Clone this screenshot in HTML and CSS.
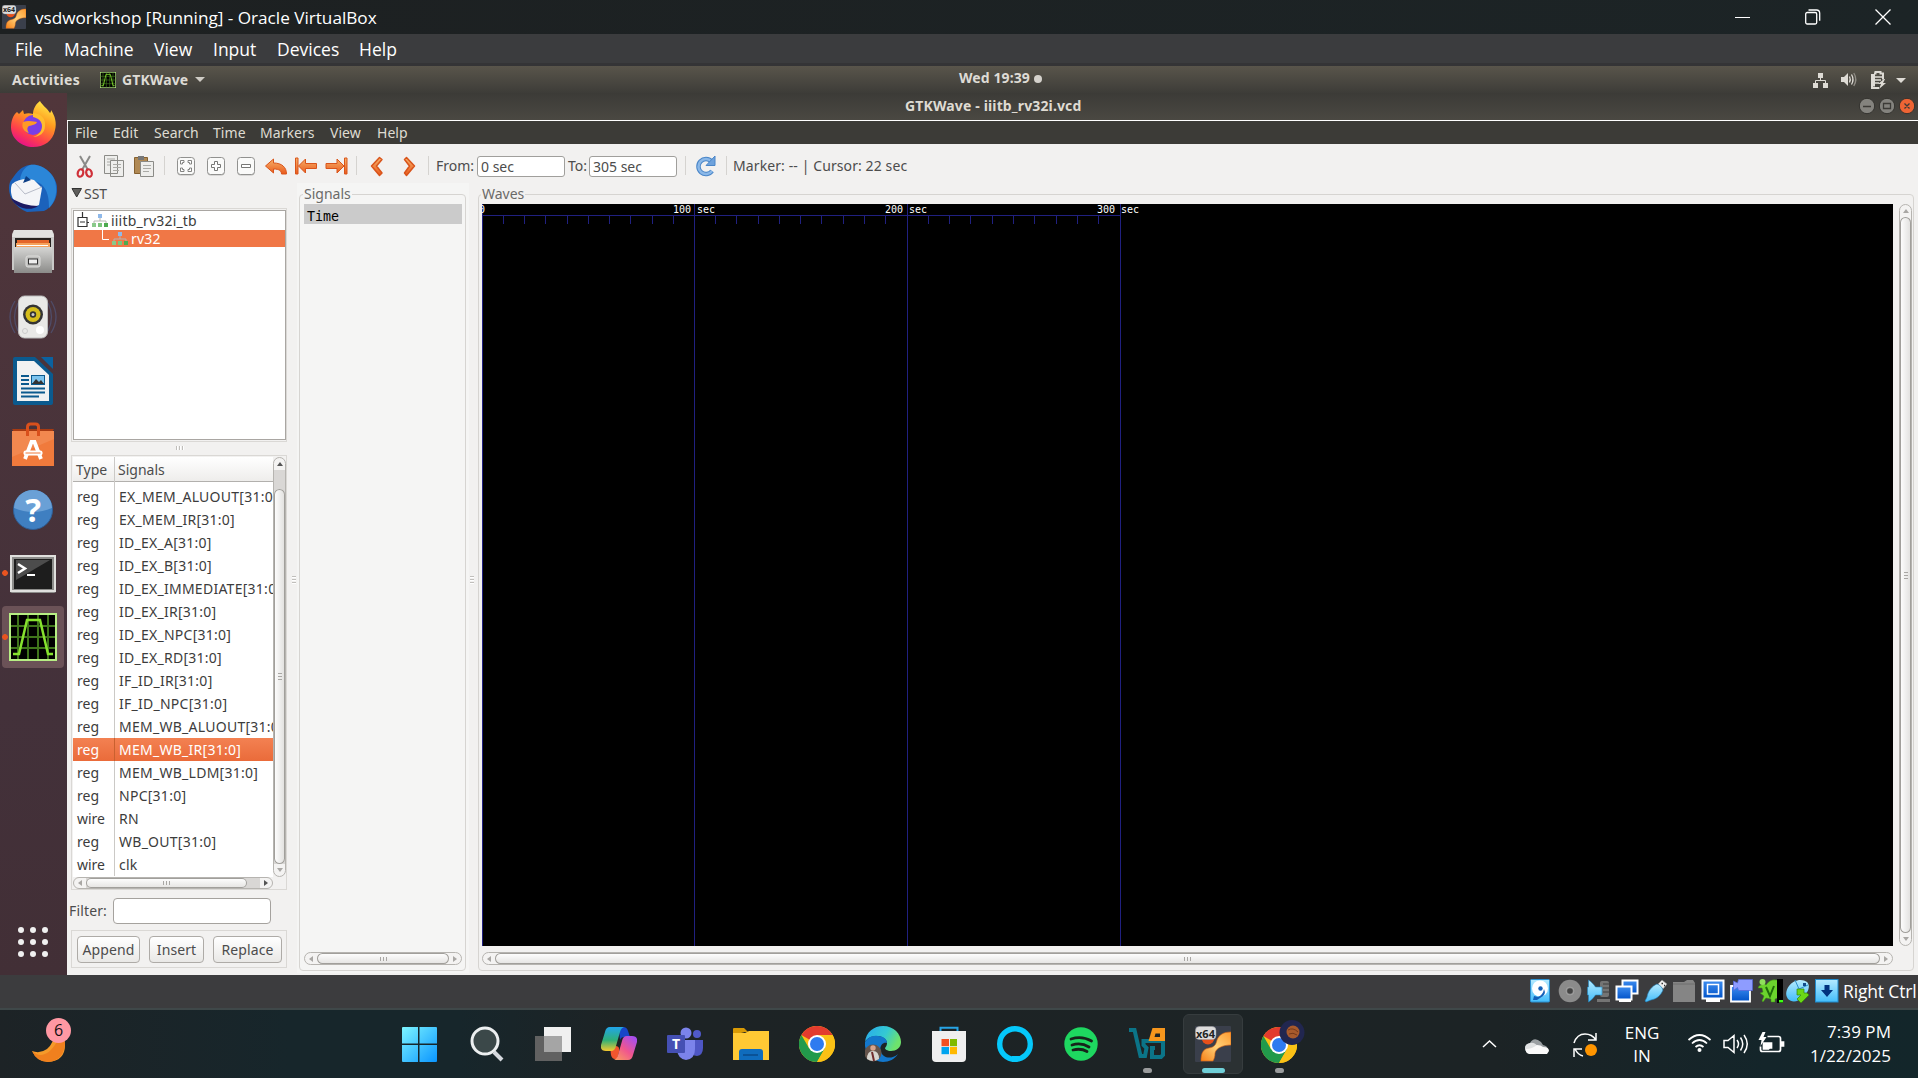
FILE: index.html
```html
<!DOCTYPE html>
<html lang="en">
<head>
<meta charset="utf-8">
<title>vsdworkshop [Running] - Oracle VirtualBox</title>
<link rel="stylesheet" href="styles.css">
</head>
<body>
<svg width="0" height="0" class="defs">
  <defs>
    <linearGradient id="orange" x1="0" y1="0" x2="0" y2="1"><stop offset="0" stop-color="#f6b26b"/><stop offset="1" stop-color="#ea5a1c"/></linearGradient>
    <linearGradient id="grey" x1="0" y1="0" x2="0" y2="1"><stop offset="0" stop-color="#d6d6d4"/><stop offset="1" stop-color="#8b8b89"/></linearGradient>
    <linearGradient id="cyan" x1="0" y1="0" x2="0" y2="1"><stop offset="0" stop-color="#b5eaff"/><stop offset="1" stop-color="#43bdfa"/></linearGradient>
    <linearGradient id="win" x1="0" y1="0" x2="1" y2="1"><stop offset="0" stop-color="#7df5ff"/><stop offset="1" stop-color="#0a95ff"/></linearGradient>
    <linearGradient id="vbx" x1="1" y1="0" x2="0" y2="1"><stop offset="0" stop-color="#ff9a2e"/><stop offset=".5" stop-color="#ffd27a"/><stop offset="1" stop-color="#f77f16"/></linearGradient>
    <linearGradient id="blu" x1="0" y1="0" x2="0" y2="1"><stop offset="0" stop-color="#3d8df0"/><stop offset="1" stop-color="#0052c8"/></linearGradient>
    <symbol id="i-vbox" viewBox="0 0 36 36">
      <rect width="36" height="36" rx="1" fill="#3a3f4b"/>
      <circle cx="13" cy="12" r="6.500" fill="#e8501a"/>
      <path d="M36 6v13c-8 0-15 3-16 8 0 4-1 6-2 8H6c0-8 2-12 8-13 6-1 7-4 8-8 2-5 6-8 14-8Z" fill="url(#vbx)" stroke="#d9600e" stroke-width=".6"/>
      <rect x="0.500" y="0.500" width="20.500" height="13" rx="4" fill="#dcdcdc" stroke="#9a9a9a" stroke-width=".5"/>
    </symbol>
    <symbol id="i-gtkwave" viewBox="0 0 48 48">
      <rect width="48" height="48" fill="#b7ee84"/><rect x="2" y="2" width="44" height="44" fill="#000"/>
      <path d="M9 2v44M19 2v44M29 2v44M39 2v44M2 13h44M2 24h44M2 35h44" stroke="#3f741b" stroke-width="2"/>
      <path d="M4 41h6L18 7h13l8 34h5" fill="none" stroke="#86e22e" stroke-width="2.500"/>
    </symbol>
    <symbol id="i-chrome" viewBox="0 0 36 36">
      <circle cx="18" cy="18" r="18" fill="#fbc116"/>
      <path d="M18 18 2.400 9A18 18 0 0 1 33.600 9H18Z" fill="#e33b2e"/>
      <path d="M2.400 9A18 18 0 0 0 18 36L25.800 22.500 18 18 10.200 22.500Z" fill="#229a4b"/>
      <path d="M33.600 9A18 18 0 0 1 18 36L25.800 22.500 18 9Z" fill="#fbc116"/>
      <circle cx="18" cy="18" r="9" fill="#fff"/><circle cx="18" cy="18" r="7" fill="#2f7bf0"/>
    </symbol>
    <symbol id="i-hier" viewBox="0 0 16 14">
      <path d="M8 4v3M2 9V7h12v2" fill="none" stroke="#b4b4b0"/>
      <rect x="6" y="0" width="4" height="4" fill="#8fb9ea"/><rect x="0" y="9" width="4" height="4" fill="#8ac98a"/><rect x="6" y="9" width="4" height="4" fill="#7cc47c"/><rect x="12" y="9" width="4" height="4" fill="#4daa4f"/>
    </symbol>
    <symbol id="i-btn" viewBox="0 0 18 19">
      <rect x=".5" y="1" width="17" height="17.500" rx="3" fill="#bdbdbb"/>
      <rect x=".5" y=".5" width="17" height="17" rx="3" fill="#fafaf9" stroke="#91918f"/>
    </symbol>
  </defs>
</svg>

<header class="titlebar">
  <div class="vbox-mark"><svg width="24" height="24"><use href="#i-vbox"/></svg><b>x64</b></div>
  <span class="titlebar-text">vsdworkshop [Running] - Oracle VirtualBox</span>
  <div class="win-controls">
    <svg width="16" height="16"><path d="M0 8.500h15" stroke="#fff"/></svg>
    <svg width="16" height="16" fill="none" stroke="#fff"><rect x=".7" y="3.500" width="11" height="11.500" rx="1.500" stroke-width="1.300"/><path d="M3.500 1h8a3.200 3.200 0 0 1 3.200 3.200v7.500" stroke-width="1.300"/></svg>
    <svg width="16" height="16"><path d="m.5.5 15 15m0-15-15 15" stroke="#fff" stroke-width="1.300"/></svg>
  </div>
</header>
<nav class="vb-menu"><span>File</span><span>Machine</span><span>View</span><span>Input</span><span>Devices</span><span>Help</span></nav>

<section class="guest">
  <div class="top-panel">
    <span class="activities">Activities</span>
    <svg width="16" height="16" class="app-ico"><use href="#i-gtkwave"/></svg>
    <span class="app-name">GTKWave</span><i class="caret"></i>
    <span class="clock">Wed 19:39</span><i class="dot"></i>
    <svg class="ind" width="94" height="18" fill="#dedbd5">
      <path d="M6 2h5v5H6zM1 12h5v5H1zM11 12h5v5h-5z"/><path d="M8.500 7v3M3.500 12v-2.500h10V12" fill="none" stroke="#dedbd5"/>
      <path d="M29 6h3l4-4v13l-4-4h-3z"/><path d="M37.500 5.500q1.500 3 0 6M39.500 3.500q3 5 0 10" fill="none" stroke="#dedbd5" stroke-width="1.300"/><path d="M41.800 2q4 6.500 0 13" fill="none" stroke="#8f8c85" stroke-width="1.300"/>
      <path d="M62 2.500h1.500V1h5v1.500H71v6" fill="none" stroke="#dedbd5" stroke-width="2"/><path d="M60 3v14h7M62 3v12.500" fill="none" stroke="#dedbd5" stroke-width="2"/><path d="M62 6h8M62 9h7M62 12h5" stroke="#dedbd5" stroke-width="1.500"/><path d="m72 8-6 5h3l-2 5 7-6h-3l2-4z"/>
      <path d="M84 7h10l-5 5z"/>
    </svg>
  </div>

  <div class="desktop">
    <aside class="dock">
      <div class="dock-cell"><svg width="48" height="48" viewBox="0 0 48 48">
        <defs><linearGradient id="ff" x1=".8" y1="0" x2=".3" y2="1"><stop offset="0" stop-color="#fff04a"/><stop offset=".4" stop-color="#ff9a1f"/><stop offset=".75" stop-color="#ff3f4c"/><stop offset="1" stop-color="#e5108b"/></linearGradient></defs>
        <path d="M31 1c2 4 7 7 10 12 1-1 1-2 1-3 4 6 6 13 4 20-2 11-11 17-22 17S2 39 2 27c0-6 2-12 6-15l2 2 4-4 1 4c3-1 6-1 9 0 0-5 3-10 7-13Z" fill="url(#ff)"/>
        <circle cx="24" cy="25" r="10" fill="#7a3ee6"/><path d="M14 22c6-2 12 0 14 0-1 3-5 3-8 4-3 2-1 6 0 7-5-1-8-6-6-11Z" fill="#ff9a25"/><path d="M24 13c7 0 13 5 12 13 0 7-6 11-12 11 6-2 9-6 9-11s-4-8-9-9Z" fill="#ffbd2e"/>
      </svg></div>
      <div class="dock-cell"><svg width="48" height="48" viewBox="0 0 48 48">
        <path d="M21 1c11-2 25 8 27 21 1 10-3 20-13 25l-17 1C6 43 0 34 0 24c0-4 1-7 3-9C8 8 12 2 21 1Z" fill="#1b62bb"/>
        <path d="M21 1C33-1 47 10 47 23c1 8-2 16-7 21 0-9-1-18-8-24-6-4-15-5-21-2 0-8 4-15 10-17Z" fill="#2b86d8"/>
        <path d="M3 20c6-5 15-6 22-4l8 8-3 17c-7 4-20 2-26-6-2-4-3-10-1-15Z" fill="#f4f5f8"/><path d="m6 19 10 11 17-7" fill="none" stroke="#b8bcc8"/><path d="M2 34c8 5 18 8 27 8-6 5-21 4-27-8Z" fill="#1d1a62"/><path d="m17 12 5 4-8 3z" fill="#0c3f86"/>
      </svg></div>
      <div class="dock-cell"><svg width="48" height="48" viewBox="0 0 48 48">
        <path d="M5 2h38l2 4v36H3V6Z" fill="#c9c9c7"/><path d="M5 2h38l2 7H3z" fill="#e2e2e0"/><rect x="6" y="10" width="36" height="11" fill="#26221f"/><path d="M8 12h32v3H8z" fill="#e4652a"/><path d="M7 15h34v5H7z" fill="#f5a25c"/><path d="M8 17h31v1H8z" fill="#fff"/><path d="M5 19h38v26H5z" fill="url(#grey)"/>
        <rect x="17" y="28" width="14" height="11" rx="2" fill="#bfbfbd" stroke="#dededc"/><rect x="19.500" y="31" width="9" height="5" fill="#eee" stroke="#333"/>
      </svg></div>
      <div class="dock-cell"><svg width="48" height="48" viewBox="0 0 48 48">
        <path d="M6 8q-10 16 0 32M42 8q10 16 0 32M9 10q-7 14 0 28M39 10q7 14 0 28" fill="none" stroke="#4f4c68" stroke-width="1.300"/>
        <rect x="9.500" y="3" width="29" height="42" rx="6" fill="#e9e9e7" stroke="#bbb"/><circle cx="24" cy="21.500" r="10" fill="#343434"/><circle cx="24" cy="21.500" r="7.500" fill="#d5bd1b"/><circle cx="24" cy="21.500" r="3.200" fill="#333"/><circle cx="24" cy="21.500" r="1.500" fill="#ccc"/><circle cx="31" cy="37" r="4" fill="#fff"/><circle cx="16" cy="38" r="2.500" fill="none" stroke="#ccc"/>
      </svg></div>
      <div class="dock-cell"><svg width="48" height="48" viewBox="0 0 48 48">
        <path d="M4 2q0-2 2-2h20l18 17v29q0 2-2 2H6q-2 0-2-2Z" fill="#0b5a8e"/><path d="M32 0h12v12Z" fill="#0b62a0"/><path d="M8 4h17l15 14v26H8z" fill="#f1f2f2"/><path d="M12 19h8M12 23h8M12 27h8M12 31.500h24M12 35.500h24M12 39.500h18" stroke="#0b5a8e" stroke-width="2"/><rect x="22" y="18" width="14" height="10" fill="#0b5a8e"/><path d="M23 19h12v7H23z" fill="#7cc4ee"/><path d="m23 27 4-5 3 3 2-2 3 4z" fill="#333"/>
      </svg></div>
      <div class="dock-cell"><svg width="48" height="48" viewBox="0 0 48 48">
        <path d="M3 8h42l-2 3H5z" fill="#a83b12"/><path d="M3 10h42v35H3z" fill="#f07a3c"/><path d="M3 10h42v8L3 36z" fill="#f2884f"/><path d="M18.500 15V6q0-3 3-3h5q3 0 3 3v9" fill="none" stroke="#d9501c" stroke-width="3"/>
        <path d="m16 38 6.500-17h3L32 38" fill="none" stroke="#fff" stroke-width="3.800"/><rect x="14.500" y="29.500" width="19" height="5" rx="2" fill="#fff"/><path d="M16.500 32h15" stroke="#f07a3c"/>
      </svg></div>
      <div class="dock-cell"><svg width="48" height="48" viewBox="0 0 48 48"><circle cx="24" cy="24" r="19.500" fill="#3f7fc1" stroke="#2f5f97"/><path d="M5 22a19 18 0 0 1 38 0q-19 8-38 0Z" fill="#6aa0d6"/><text x="24" y="35.500" text-anchor="middle" class="q-mark">?</text></svg></div>
      <div class="dock-cell running"><svg width="48" height="48" viewBox="0 0 48 48"><rect x="1" y="5" width="46" height="38" rx="2" fill="#8c8c8a"/><rect x="2" y="6" width="44" height="35" fill="none" stroke="#e0e0de" stroke-width="2"/><rect x="5" y="9" width="38" height="30" fill="#1d1d1d"/><path d="M7 10h34L7 30z" fill="#4c4c4c"/><path d="m9 14 7 4.500L9 23" fill="none" stroke="#fff" stroke-width="2.500"/><path d="M18 25h8" stroke="#fff" stroke-width="2"/></svg></div>
      <div class="dock-cell running active"><svg width="48" height="48"><use href="#i-gtkwave"/></svg></div>
      <div class="apps-grid"><i></i><i></i><i></i><i></i><i></i><i></i><i></i><i></i><i></i></div>
    </aside>

    <main class="gtk">
      <div class="gtk-title"><span>GTKWave - iiitb_rv32i.vcd</span>
        <svg width="58" height="18"><g stroke="#33322e"><circle cx="9" cy="9" r="7.700" fill="#84837e"/><circle cx="29" cy="9" r="7.700" fill="#84837e"/><circle cx="49" cy="9" r="7.700" fill="#ee6434"/></g><path d="M5 9.500h8M25.500 6.500h7v5h-7zM46.500 6.500l5 5m0-5-5 5" fill="none" stroke="#3c3b37" stroke-width="1.300"/></svg>
      </div>
      <nav class="gtk-menu"><span>File</span><span>Edit</span><span>Search</span><span>Time</span><span>Markers</span><span>View</span><span>Help</span></nav>

      <div class="toolbar">
        <svg class="tools" width="364" height="30">
          <g fill="none" stroke="#8a8a88" stroke-width="2"><path d="M13 4l8 14M23 4l-8 14"/></g>
          <g fill="none" stroke="#cf3038" stroke-width="2.200"><ellipse cx="13.500" cy="21" rx="2.700" ry="3.800" transform="rotate(18 13.500 21)"/><ellipse cx="22" cy="21" rx="2.700" ry="3.800" transform="rotate(-18 22 21)"/></g>
          <g stroke="#8b8b87"><path d="M37.500 3.500h13v18h-13zM43.500 8.500h13v16h-13z" fill="#eeeeec"/><path d="M40 7h8M40 10h3M40 13h3M46 12.500h8M46 15.500h8M46 18.500h6" stroke="#aaaaa6"/></g>
          <path d="M67.500 5.500h13v16h-13z" fill="#b08954" stroke="#85602f"/><path d="M71 4h6v4h-6z" fill="#777"/><path d="M73.500 9.500h13v15h-13z" fill="#eeeeec" stroke="#8b8b87"/><path d="M76 13.500h8M76 16.500h8M76 19.500h6" stroke="#aaaaa6"/>
          <path d="M97.500 4v19M289.500 4v19M361.500 4v19" stroke="#d5d3d0"/>
          <use href="#i-btn" x="110" y="5" width="18" height="19"/><use href="#i-btn" x="140" y="5" width="18" height="19"/><use href="#i-btn" x="170" y="5" width="18" height="19"/>
          <path d="M117 8.500h-3.500V12h2v-1.500h1.500zM121 8.500h3.500V12h-2v-1.500H121zM117 19.500h-3.500V16h2v1.500h1.500zM121 19.500h3.500V16h-2v1.500H121z" fill="#fff" stroke="#777775" stroke-width=".9"/>
          <path d="M147.500 9.500h3v3h3v3h-3v3h-3v-3h-3v-3h3zM174.500 12.500h9v3h-9z" fill="#fff" stroke="#777775"/>
          <g fill="url(#orange)" stroke="#d9541b" stroke-linejoin="round"><path d="m198.500 14 8-7v4c8 0 13 4 13 11h-5c0-3-2-5-8-5v4z"/><path d="M228.500 6h2.500v16h-2.500zM231.500 14l7-7v4.500h11v5h-11V21z"/><path d="M277.500 6h2.500v16h-2.500zM277 14l-7-7v4.500h-11v5h11V21z"/><path d="m312.500 5.500 2.500 2-5.500 6.500 5.500 7-2.500 2.500-8-9.500zM339.500 5.500l-2 2 5 6.500-5 7 2 2.500 8-9.500z" stroke-width="1.500"/></g>
        </svg>
        <span class="tb-from">From:</span><span class="entry">0 sec</span><span class="tb-to">To:</span><span class="entry">305 sec</span>
        <svg width="50" height="30" class="reload"><path d="M8.500 4v19M49.500 4v19" stroke="#d5d3d0"/><path d="M34.500 9.500a7.500 7.500 0 1 0 .5 9.500" fill="none" stroke="#4a86c8" stroke-width="4.500"/><path d="M34.500 9.500a7.500 7.500 0 1 0 .5 9.500" fill="none" stroke="#8bb8e8" stroke-width="2.500"/><path d="M38 4v9.500H29z" fill="#6ea2dc" stroke="#4a86c8"/></svg>
        <span class="tb-status">Marker: -- | Cursor: 22 sec</span>
      </div>

      <div class="panes">
        <div class="left">
          <div class="sst"><svg width="12" height="12"><path d="M1 1.500h9.500L5.700 10z" fill="#5f5e5c" stroke="#333"/></svg><span>SST</span></div>
          <div class="frame tree">
            <div class="tree-in">
              <div class="tree-row"><svg width="12" height="18" class="exp"><path d="M5.500 0v5M10.500 10.500h2M1 5.500h9v9H1zM3 10h5" fill="none" stroke="#333" stroke-width="1.200"/></svg><svg width="16" height="14"><use href="#i-hier"/></svg><span>iiitb_rv32i_tb</span></div>
              <div class="tree-row sel"><svg width="8" height="17" class="elbow"><path d="M.5 0v9.500H7" fill="none" stroke="#fff"/></svg><svg width="16" height="14"><use href="#i-hier"/></svg><span>rv32</span></div>
            </div>
          </div>
          <div class="hgrip"><i></i><i></i><i></i></div>
          <div class="frame list">
            <div class="list-main">
              <div class="list-head"><span>Type</span><span>Signals</span></div>
              <div class="list-gap"><span></span></div>
              <div class="row"><span>reg</span><span>EX_MEM_ALUOUT[31:0]</span></div>
              <div class="row"><span>reg</span><span>EX_MEM_IR[31:0]</span></div>
              <div class="row"><span>reg</span><span>ID_EX_A[31:0]</span></div>
              <div class="row"><span>reg</span><span>ID_EX_B[31:0]</span></div>
              <div class="row"><span>reg</span><span>ID_EX_IMMEDIATE[31:0]</span></div>
              <div class="row"><span>reg</span><span>ID_EX_IR[31:0]</span></div>
              <div class="row"><span>reg</span><span>ID_EX_NPC[31:0]</span></div>
              <div class="row"><span>reg</span><span>ID_EX_RD[31:0]</span></div>
              <div class="row"><span>reg</span><span>IF_ID_IR[31:0]</span></div>
              <div class="row"><span>reg</span><span>IF_ID_NPC[31:0]</span></div>
              <div class="row"><span>reg</span><span>MEM_WB_ALUOUT[31:0]</span></div>
              <div class="row sel"><span>reg</span><span>MEM_WB_IR[31:0]</span></div>
              <div class="row"><span>reg</span><span>MEM_WB_LDM[31:0]</span></div>
              <div class="row"><span>reg</span><span>NPC[31:0]</span></div>
              <div class="row"><span>wire</span><span>RN</span></div>
              <div class="row"><span>reg</span><span>WB_OUT[31:0]</span></div>
              <div class="row"><span>wire</span><span>clk</span></div>
            </div>
            <div class="sb v"><b class="up dark"></b><div class="track top-gap"><div class="thumb"><i></i><i></i><i></i></div></div><b class="down"></b></div>
            <div class="sb h"><b class="lt"></b><div class="track end-gap"><div class="thumb"><i></i><i></i><i></i></div></div><b class="rt dark"></b></div>
          </div>
          <div class="filter"><span>Filter:</span><i class="filter-box"></i></div>
          <div class="frame buttons"><button>Append</button><button>Insert</button><button>Replace</button></div>
        </div>
        <div class="vgrip"><i></i><i></i><i></i></div>

        <div class="signals-pane">
          <fieldset><legend>Signals</legend>
            <div class="signals-in"><div class="time-head">Time</div><div class="sb h"><b class="lt"></b><div class="track"><div class="thumb"><i></i><i></i><i></i></div></div><b class="rt"></b></div></div>
          </fieldset>
        </div>
        <div class="vgrip second"><i></i><i></i><i></i></div>

        <div class="waves-pane">
          <fieldset><legend>Waves</legend>
            <div class="waves-in">
              <svg class="wave" width="1411" height="742">
                <rect width="1411" height="742" fill="#000"/>
                <path d="M.5 0v742M212.500 11v731M425.500 11v731M638.500 11v731M0 11.500h638" stroke="#202080" fill="none"/>
                <path d="M212.500 0v11M425.500 0v11M638.500 0v11" stroke="#202080"/>
                <path d="M21.500 12v8M42.500 12v8M63.500 12v8M85.500 12v8M106.500 12v8M127.500 12v8M148.500 12v8M170.500 12v8M191.500 12v8M233.500 12v8M254.500 12v8M276.500 12v8M297.500 12v8M318.500 12v8M339.500 12v8M361.500 12v8M382.500 12v8M403.500 12v8M446.500 12v8M467.500 12v8M488.500 12v8M510.500 12v8M531.500 12v8M552.500 12v8M574.500 12v8M595.500 12v8M616.500 12v8" stroke="#202080"/>
                <g class="ruler"><text x="-3" y="9">0</text><text x="191" y="9">100 sec</text><text x="403" y="9">200 sec</text><text x="615" y="9">300 sec</text></g>
              </svg>
              <div class="sb v"><b class="up"></b><div class="track"><div class="thumb"><i></i><i></i><i></i></div></div><b class="down"></b></div>
              <div class="sb h"><b class="lt"></b><div class="track"><div class="thumb"><i></i><i></i><i></i></div></div><b class="rt"></b></div>
            </div>
          </fieldset>
        </div>
      </div>
    </main>
  </div>
</section>

<footer class="vb-status">
  <svg width="24" height="24" viewBox="0 0 24 24"><rect x="2.500" y=".5" width="19" height="22.500" rx="1" fill="url(#cyan)" stroke="#2a8fd0"/><circle cx="12" cy="9.500" r="8" fill="#fff"/><circle cx="12.500" cy="9.500" r="2.200" fill="#1460b8"/><path d="M16 10q3 6-4 9l-3 2H5l1-4 4 1q5-2 6-8z" fill="#1460b8"/></svg>
  <svg width="24" height="24" viewBox="0 0 24 24"><circle cx="12" cy="12" r="11.300" fill="#8b8b8b"/><circle cx="12" cy="12" r="2.800" fill="#444"/><circle cx="12" cy="12" r="4" fill="none" stroke="#9d9d9d"/></svg>
  <svg width="24" height="24" viewBox="0 0 24 24"><g fill="#747474"><rect x="13" y="2" width="9" height="16" rx="2"/><path d="M10 20h13v3H10z"/></g><path d="M16 5h7M16 9h7M16 13h7" stroke="#3e3e3e"/><path d="M1.500 1c3 2 5 4 7 7H15v8H8.500c-2 3-4 5-7 7V16H.5V8h1z" fill="url(#cyan)" stroke="#2384bd" stroke-width=".6"/></svg>
  <svg width="24" height="24" viewBox="0 0 24 24"><path d="M7.500 1.500h15v13h-15z" fill="url(#blu)" stroke="#fff" stroke-width="2"/><path d="M4 21h12v2H4z" fill="#fff"/><path d="M1.500 7.500h15v13h-15z" fill="url(#blu)" stroke="#fff" stroke-width="2"/></svg>
  <svg width="24" height="24" viewBox="0 0 24 24"><path d="m14 5 4-4 5 4-4 5z" fill="#eee" stroke="#888" stroke-width=".6"/><path d="M17.500 4.500h1.500M20 6.500h1" stroke="#333" stroke-width="1.500"/><path d="M13 5c3 1 5 3 6 6-2 5-6 9-12 10l-5 2-1-1 2-4C4 12 8 7 13 5Z" fill="url(#cyan)" stroke="#1e7ab5" stroke-width=".6"/></svg>
  <svg width="24" height="24" viewBox="0 0 24 24"><path d="M1 3h11l3-2h6l2 3v19H1z" fill="#858585"/><path d="M1 5h22" stroke="#6f6f6f"/></svg>
  <svg width="24" height="24" viewBox="0 0 24 24"><path d="M5 19h14v4H5z" fill="#fff"/><rect x="1.500" y="1.500" width="21" height="18" fill="url(#blu)" stroke="#fff" stroke-width="2"/><rect x="6.500" y="5.500" width="11" height="9.500" fill="none" stroke="#fff" stroke-width="1.500"/></svg>
  <svg width="24" height="24" viewBox="0 0 24 24"><path d="M2 7h19v15.500H2z" fill="url(#blu)" stroke="#fff" stroke-width="1.800"/><path d="M9.500.5h14v11h-14l-1-3-4 3V2l4 2z" fill="#8e9cff" stroke="#5364d8" stroke-width=".7"/></svg>
  <svg width="26" height="24" viewBox="0 0 26 24"><path d="M5 5q1-1 3 1 4-6 10-5h2v18l-3 1v3h-4v-3l-5-1-3 4-1-1 2-5-4-3 3-1-1-4-4 0 1-2z" fill="#6bd32d" stroke="#3b8a14" stroke-width=".5"/><circle cx="4.500" cy="3" r="3" fill="#8fe05c"/><path d="m8 8 4 9 4-10" fill="none" stroke="#1f6b0a" stroke-width="2"/><path d="M19 0h6v24h-6z" fill="#000"/><path d="M21 21h4v2.500h-4z" fill="#3dff14"/></svg>
  <svg width="24" height="24" viewBox="0 0 24 24"><path d="M3 7C7 1 16-1 21 3c4 4 1 11-4 15-5 5-11 6-15 2-3-4-2-9 1-13Z" fill="url(#cyan)"/><path d="m9 1 4 9 9-4" fill="none" stroke="#2c8cc8"/><path d="M17 4h3v3h-3z" fill="#124a8c"/><path d="M11 10h7v4l3 0 2 2-8 8-4-4 4-4h-4z" fill="#6bd616" stroke="#318808" stroke-width=".7"/></svg>
  <svg width="24" height="24" viewBox="0 0 24 24"><rect x=".5" y=".5" width="22.500" height="22.500" fill="url(#cyan)" stroke="#218bcc"/><path d="M9.500 6h5v5H18l-6 7-6-7h3.500z" fill="#00337f"/></svg>
  <span>Right Ctrl</span>
</footer>

<footer class="taskbar">
  <div class="weather"><svg width="36" height="36"><path d="M24 0q9 2 9 15 0 16-17 17Q5 32 0 21q8 3 15-2 7-6 9-19Z" fill="#f59a2a"/><path d="M29 4q4 5 4 10-2 17-17 18Q5 32 0 21q15 13 29-17Z" fill="#f0801e"/></svg><b>6</b></div>
  <div class="tasks">
    <div class="task start"><svg width="36" height="36"><path d="M1 2q0-1 1-1h15v16.500H1zM18.500 1H35q1 0 1 1v15.500H18.500zM1 19h16v17H2q-1 0-1-1zM18.500 19H36v16q0 1-1 1H18.500z" fill="url(#win)"/></svg></div>
    <div class="task"><svg width="36" height="36"><path d="m25 26 8 8" stroke="#d5d9de" stroke-width="4"/><circle cx="16" cy="15" r="13" fill="#3b4849" stroke="#eceff0" stroke-width="3"/></svg></div>
    <div class="task"><svg width="36" height="36"><path d="M0 10h27v25H0z" fill="#616161"/><path d="M9 1h27v25H9z" fill="#f0f0f0"/><path d="M9 10h18v16H9z" fill="#a5a5a5"/></svg></div>
    <div class="task"><svg width="36" height="36">
      <defs><linearGradient id="co1" x1="0" y1="0" x2="0" y2="1"><stop offset="0" stop-color="#21a5ea"/><stop offset=".55" stop-color="#2fb078"/><stop offset="1" stop-color="#f5c92e"/></linearGradient><linearGradient id="co2" x1=".8" y1="0" x2="0" y2="1"><stop offset="0" stop-color="#a64ef0"/><stop offset=".5" stop-color="#f0568e"/><stop offset="1" stop-color="#fba05c"/></linearGradient></defs>
      <path d="M18 1h4q4 0 5 4l2 6h-6q-3 0-4 3Z" fill="#1846c8"/><path d="M9 20h6q4 0 3 6l-2 7h-2q-3 0-4-4Z" fill="#f0562e"/>
      <path d="M9 1h14q-3 1-4 5l-4 14q-1 5-5 5H5q-6 0-5-6L4 6q1-5 5-5Z" fill="url(#co1)"/><path d="M26 10h5q6 0 5 6l-4 13q-1 5-5 5H13q3-1 4-5l4-14q1-5 5-5Z" fill="url(#co2)"/></svg></div>
    <div class="task"><svg width="36" height="36"><circle cx="19" cy="7" r="5.500" fill="#7b83eb"/><circle cx="30" cy="8" r="4" fill="#5059c9"/><path d="M27 14h9v8q0 7-6 8l-5-1z" fill="#4e56c4"/><path d="M10 14h18v9q0 10-9 11-8-1-9-10z" fill="#7b83eb"/><rect y="9" width="18" height="18" rx="1" fill="#4550b4"/><text x="9" y="23" text-anchor="middle" class="teams-t">T</text></svg></div>
    <div class="task"><svg width="36" height="36"><path d="M0 3q0-1 1-1h10l4 4h-3L0 9z" fill="#d99a05"/><path d="M0 7h12l4-2h20v29H0z" fill="#ffc934"/><path d="M6 34V26q0-3 3-3h18q3 0 3 3v8z" fill="#0f6cbd"/><path d="M10 29h15" stroke="#0a4a8a" stroke-width="1.500"/></svg></div>
    <div class="task"><svg width="36" height="36"><use href="#i-chrome"/></svg></div>
    <div class="task"><svg width="36" height="36">
      <defs><linearGradient id="eg" x1="0" y1="0" x2="1" y2=".4"><stop offset="0" stop-color="#27a9ee"/><stop offset=".6" stop-color="#34c9d2"/><stop offset="1" stop-color="#6ee36c"/></linearGradient></defs>
      <path d="M0 16C1 6 9 0 18 0c11 0 18 8 18 16 0 6-5 9-10 9-4 0-6-2-6-3 1-1 2-3 2-5 0-4-5-7-10-7S2 12 0 16Z" fill="url(#eg)"/><path d="M0 16c3-5 8-7 13-6 5 0 9 3 9 7-5-1-8 4-6 9 2 6 10 8 17 2-3 5-9 8-15 8C6 35-1 27 0 16Z" fill="#1377cc"/><circle cx="8" cy="27" r="8.500" fill="#65544b"/><path d="M2 33q0-8 6-8t6 8q-6 4-12 0Z" fill="#d8d5cf"/><circle cx="8" cy="22" r="2.700" fill="#d7a48c"/><path d="m7 26 2 9" stroke="#702c2c" stroke-width="2"/></svg></div>
    <div class="task"><svg width="36" height="36"><path d="M9.500 8V1.700h17V8" fill="none" stroke="#27a4e5" stroke-width="2"/><path d="M1 5h34v27q0 4-4 4H5q-4 0-4-4z" fill="#efefef"/><path d="M10.500 13h7.500v7.200h-7.500z" fill="#f25022"/><path d="M19 13h7v7.200h-7z" fill="#7fba00"/><path d="M10.500 21h7.500v7.200h-7.500z" fill="#00a4ef"/><path d="M19 21h7v7.200h-7z" fill="#ffb900"/></svg></div>
    <div class="task"><svg width="36" height="36"><circle cx="18" cy="18" r="15.300" fill="none" stroke="#05c8fb" stroke-width="5.400"/><path d="M15 30v6h5l5-4-3-2z" fill="#05c8fb"/></svg></div>
    <div class="task"><svg width="36" height="36"><circle cx="18" cy="18" r="16.700" fill="#1ed760"/><path d="M8 13q11-3.500 20.500 2M9 19q9-3 17 2M10 24q8-2 14 1.500" fill="none" stroke="#17231b" stroke-width="2.800" stroke-linecap="round"/></svg></div>
    <div class="task dotted"><svg width="36" height="36"><path d="M0 4h5.500l6 26H16l1.500-8-3-3V15H34v4M26 22h-3v9h9l2-2V19" fill="none" stroke="#0b7488" stroke-width="4"/><path d="M23.500 2H36v13H19.500z" fill="#f6961d"/><path d="M26.500 7.500h4.500v3.500h-5.500z" fill="#1c2325"/></svg></div>
    <div class="task current"><svg width="36" height="36"><use href="#i-vbox"/></svg><b>x64</b></div>
    <div class="task dotted"><svg width="46" height="46" class="profile"><use href="#i-chrome" x="5" y="6" width="36" height="36"/><circle cx="36" cy="11.500" r="12.500" fill="#21264f"/><circle cx="37" cy="11" r="6.500" fill="#a85a2c"/><path d="M32 9q5-3 10 2M33 13q4-2 8 1" stroke="#74381a" fill="none"/></svg></div>
  </div>
  <svg class="tray" width="120" height="40" fill="none" stroke="#fff" stroke-width="1.500">
    <path d="m3 23 6.500-6 6.500 6"/>
    <g transform="translate(5)">
    <path d="M44 29q-4-1-4-5t5-5q4-7 11-1l2 3q5 1 5 5 0 4-4 4H45Z" fill="#9a9fa2" stroke="none"/><path d="M44 29q-4-1-4-5t5-5q5-1 8 4l5 6Z" fill="#e0e2e3" stroke="none"/><path d="M44 30q-4-1-3-5 6 0 11-4 4 0 6 2 6 0 6 4l-2 3z" fill="#fafafa" stroke="none"/>
    <path d="M89 19q3-9 11-9 7 0 11 6M111 9v7h-8M98 32q-5-1-8-7M89 33v-8h8"/><circle cx="106" cy="26" r="6" fill="#ff9500" stroke="none"/>
    </g>
  </svg>
  <div class="lang">ENG<br>IN</div>
  <svg class="sys" width="100" height="32" fill="none" stroke="#fff" stroke-width="1.700">
    <path d="M1.500 12q11-10 22 0M5 15.500q7.500-7 15 0M8.500 19q4-3.500 8 0"/><circle cx="12.500" cy="22" r="2" fill="#fff" stroke="none"/>
    <path d="M37 12.500h4l6-5v17l-6-5h-4zM50 12q3 4 0 8M53.500 9.500q4.500 6.500 0 13M57 7q6.500 9 0 18" stroke-width="1.500"/>
    <g transform="translate(-1.500)"><path d="M82 8.500h11q2 0 2 2v11q0 2-2 2H77q-2 0-2-2v-3"/><path d="M96 14h2v4h-2z" fill="#fff"/><path d="M78 15h8v5h-2l-1 1h-5z" fill="#fff"/><path d="m77 4-4 8h3l-1 6 6-9h-3l2-5z" fill="#fff" stroke="none"/></g>
  </svg>
  <div class="datetime">7:39 PM<br>1/22/2025</div>
</footer>
</body>
</html>
```
FILE: styles.css
```css
* { box-sizing: border-box; }
body { margin: 0; width: 1918px; height: 1078px; overflow: hidden; display: flex; flex-direction: column; font-family: "Open Sans", "Noto Sans", sans-serif; color: #fff; }
.defs { position: absolute; }
svg { display: block; flex: none; }
span { white-space: nowrap; }

/* host window */
.titlebar { height: 34px; display: flex; align-items: center; background: linear-gradient(90deg, #1d2021, #1c2426); padding-left: 2px; }
.vbox-mark { position: relative; width: 33px; height: 24px; margin-top: 0; }
.vbox-mark b { position: absolute; left: 1px; top: 0; font-size: 7px; line-height: 9px; color: #222; }
.titlebar-text { font-size: 17.200px; letter-spacing: -0.02px; }
.win-controls { display: flex; gap: 54px; margin-left: auto; padding-right: 27px; margin-top: -1px; }
.vb-menu { height: 32px; display: grid; grid-template-columns: 49px 90px 59px 64px 82px 60px; padding-left: 15px; background: #3b3c3e; border-bottom: 3px solid #343436; font-size: 17.500px; line-height: 31px; }

/* guest desktop */
.guest { height: 909px; font-family: "Noto Sans", "Open Sans", sans-serif; }
.top-panel { height: 27px; display: flex; align-items: center; background: linear-gradient(#59554b, #3d3c38); color: #dedbd5; font-weight: 700; font-size: 14px; padding-left: 12px; }
.activities { width: 88px; letter-spacing: 0.3px; }
.app-name { margin-left: 6px; width: 73px; letter-spacing: 0.1px; }
.caret { border: 5px solid transparent; border-top-color: #cfccc5; border-bottom: 0; }
.clock { margin-left: 754px; width: 75px; margin-top: -4px; letter-spacing: 0.1px; }
.dot { width: 8px; height: 8px; border-radius: 50%; background: #d5d2cc; margin-top: -1px; }
.ind { margin-left: 770px; }
.desktop { height: 882px; display: flex; }
.dock { width: 67px; background: linear-gradient(#51363b, #43313a 70%, #422f36); display: flex; flex-direction: column; align-items: center; }
.dock-cell { width: 67px; height: 64.300px; display: flex; align-items: center; justify-content: center; padding-right: 2px; background-repeat: no-repeat; }
.dock-cell:first-child { height: 63px; padding-bottom: 1px; }
.dock-cell.running { background-image: radial-gradient(circle, #e95420 2.500px, transparent 3.200px); background-size: 10px 10px; background-position: 0 26px; }
.dock-cell.active { width: 62px; height: 62px; border-radius: 4px; background-color: #6b5257; background-position: -2px 26px; margin-right: 2px; padding-right: 0; }
.q-mark { font: 700 33px "Noto Sans", sans-serif; fill: #fff; }
.apps-grid { margin-top: 259px; margin-right: 1px; display: grid; grid-template-columns: repeat(3, 6px); gap: 6px; }
.apps-grid i { width: 6px; height: 6px; border-radius: 50%; background: #f0f0f0; }

/* application window */
.gtk { width: 1851px; background: #f2f1f0; color: #4c4c4c; font-size: 14px; }
.gtk-title { height: 28px; display: flex; align-items: center; justify-content: flex-end; background: linear-gradient(#3c3b37, #4a4842); border-bottom: 1px solid #fff; color: #dfdbd2; font-weight: 700; }
.gtk-title span { width: 953px; letter-spacing: 0.14px; margin-top: -2px; }
.gtk-title svg { margin-right: 2px; margin-top: -1px; }
.gtk-menu { height: 23px; display: grid; grid-template-columns: 38px 41px 59px 47px 70px 47px 40px; padding-left: 7px; margin-left: 1px; background: #3c3b37; color: #dfdbd2; line-height: 24px; letter-spacing: 0.05px; }
.toolbar { height: 39px; display: flex; align-items: center; padding-top: 4px; }
.tb-from { width: 41px; margin-left: 5px; }
.tb-to { width: 21px; margin-left: 3px; }
.entry { width: 88px; height: 21px; line-height: 19px; padding-left: 3px; background: #fff; border: 1px solid #a09f9c; border-radius: 3px; margin-top: 1px; }
.tb-status { margin-left: 6px; letter-spacing: 0.1px; }
.tools, .reload { margin-top: 2px; }

.panes { height: 792px; display: flex; }
.left { width: 220px; padding-left: 4px; }
.sst { height: 25px; display: flex; align-items: flex-start; line-height: 22px; }
.sst svg { margin-top: 4px; width: 13px; }
.frame { border: 1px solid #dad8d5; }
.tree { height: 234px; padding: 1px 0 1px 1px; }
.tree-in { height: 230px; background: #fff; border: 1px solid #a9a6a2; color: #3c3c3c; }
.tree-row { height: 19px; display: flex; align-items: center; padding-left: 3px; gap: 3px; }
.tree-row span { letter-spacing: 0.2px; }
.tree-row.sel { height: 17px; background: #f07746; color: #fff; padding-left: 28px; }
.tree-row .elbow { margin-right: -1px; }
.hgrip { height: 13px; display: flex; gap: 2px; align-items: center; justify-content: center; padding-bottom: 2px; }
.hgrip i { width: 1px; height: 4px; background: #c0bebb; box-shadow: 1px 0 #fff; }

.list { height: 435px; display: grid; grid-template-columns: 200px 13px; grid-template-rows: 420px 12px; padding: 1px 0 0 1px; color: #3c3c3c; }
.list-main { overflow: hidden; background: #fff; }
.list-head, .row, .list-gap { display: grid; grid-template-columns: 42px 1fr; }
.list-head { height: 25px; line-height: 25px; background: linear-gradient(#fff, #eeedeb); border-bottom: 1px solid #b2b0ad; color: #4c4c4c; }
.list-head span { padding-left: 3px; }
.list-head span:first-child, .row span:first-child { border-right: 1px solid #cbc9c6; }
.list-gap { height: 3px; }
.list-gap span { border-right: 1px solid #cbc9c6; }
.row { height: 23px; line-height: 24px; }
.row span { padding-left: 4px; overflow: hidden; }
.row span:last-child { padding-left: 4px; letter-spacing: 0.26px; }
.row.sel { background: linear-gradient(#f38152, #ea6b3a); color: #fff; }
.row.sel span:first-child { border-color: #c9602f; }

/* scrollbars */
.sb { display: flex; border: 1px solid #b6b4b0; border-radius: 7px; background: #f4f3f2; overflow: hidden; }
.sb.v { flex-direction: column; width: 13px; }
.sb.h { height: 13px; }
.list .sb.h { height: 12px; }
.sb b { flex: none; display: flex; align-items: center; justify-content: center; width: 12px; height: 12px; }
.sb.h b { height: 100%; }
.sb.v b { width: 100%; }
.sb b::after { content: ""; border: 3px solid transparent; }
.sb .up::after { border-bottom: 4px solid #a9a7a4; border-top: 0; }
.sb .down::after { border-top: 4px solid #a9a7a4; border-bottom: 0; }
.sb .lt::after { border-right: 4px solid #a9a7a4; border-left: 0; }
.sb .rt::after { border-left: 4px solid #a9a7a4; border-right: 0; }
.sb .up.dark::after { border-bottom-color: #555; }
.sb .rt.dark::after { border-left-color: #555; }
.track { flex: 1; display: flex; }
.thumb { flex: 1; display: flex; gap: 2px; align-items: center; justify-content: center; border-radius: 6px; box-shadow: inset 0 0 0 1px #a19f9b; background: linear-gradient(#fff, #e4e3e1); }
.sb.v .track { flex-direction: column; }
.sb.v .thumb { flex-direction: column; background: linear-gradient(90deg, #fff, #e0dfdd); }
.thumb i { width: 1px; height: 4px; background: #a9a7a4; }
.sb.v .thumb i { width: 4px; height: 1px; }
.top-gap { padding-top: 19px; background: #d9d7d5; }
.end-gap { padding-right: 13px; background: #d9d7d5; }

.filter { margin-top: 8px; height: 26px; display: flex; align-items: center; margin-left: -2px; }
.filter span { width: 44px; margin-top: -1px; letter-spacing: 0.15px; }
.filter-box { width: 158px; height: 26px; background: #fff; border: 1px solid #a5a29e; border-radius: 4px; }
.buttons { margin-top: 6px; height: 38px; display: flex; padding: 5px 0 0 5px; gap: 9px; }
button { font: inherit; color: #4c4c4c; height: 27px; padding: 0; border: 1px solid #aeaba7; border-radius: 4px; background: linear-gradient(#fff, #e9e8e6); width: 63px; letter-spacing: 0.1px; }
button:nth-child(2) { width: 55px; }
button:nth-child(3) { width: 69px; }
.vgrip { width: 10px; padding-left: 5px; display: flex; flex-direction: column; justify-content: center; gap: 2px; }
.vgrip i { width: 4px; height: 1px; background: #c0bebb; box-shadow: 0 1px #fff; }
.vgrip.second { width: 9px; padding-left: 1px; }

fieldset { margin: 1px 0 0; padding: 0 0 0 4px; border: 1px solid #d6d4d1; border-radius: 4px; min-width: 0; height: 787px; }
legend { padding: 0 1px; height: 20px; line-height: 20px; color: #6a6a68; margin-left: -1px; }
.signals-pane { width: 172px; padding: 0 3px 0 2px; background: #f5f5f4; height: 790px; }
.signals-in { display: grid; grid-template-rows: 742px 13px; gap: 6px; width: 158px; }
.time-head { height: 20px; color: #000; background: #cbcbcb; font: 13.300px/25px "DejaVu Sans Mono", monospace; padding-left: 3px; }
.waves-pane { width: 1440px; padding-right: 4px; }
.waves-pane fieldset { padding-left: 3px; }
.waves-in { display: grid; grid-template: 742px 13px / 1411px 13px; gap: 6px; }
.ruler { font: 10px "DejaVu Sans Mono", monospace; fill: #fff; }

/* host status bar and taskbar */
.vb-status { height: 35px; display: grid; grid-template-columns: 30.500px repeat(10, 28.500px) auto; justify-content: end; background: #3c3c3e; border-bottom: 2px solid #3f4849; padding: 4px 0 0; font-size: 17.500px; line-height: 24px; }
.vb-status span { letter-spacing: -0.15px; width: 75px; }
.taskbar { height: 68px; display: flex; align-items: center; position: relative; font-size: 17px; background: linear-gradient(90deg, #1d2326, #17262b 15%, #17262b 24%, #1d2325 32%, #1c2325 78%, #14252a 92%, #13262a); }
.weather { width: 386px; padding-left: 32px; position: relative; padding-top: 8px; }
.weather b { position: absolute; left: 46px; top: -4px; width: 25px; height: 25px; border-radius: 50%; background: #ff98a3; color: #111; font-weight: 400; font-size: 16px; line-height: 25px; text-align: center; }
.tasks { display: flex; }
.task { width: 66px; height: 68px; display: flex; align-items: center; justify-content: center; position: relative; }
.task.start { margin-right: 2px; }
.task.dotted::after, .task.current::after { content: ""; position: absolute; bottom: 5px; width: 9px; height: 5px; border-radius: 3px; background: #9a9c9d; }
.task.current { width: 60px; height: 60px; margin: 4px 3px; background: #2b3133; border: 1px solid #363c3e; border-radius: 6px; }
.task.current::after { width: 23px; background: #70cfd8; bottom: 0; }
.task.current b { position: absolute; left: 12px; top: 12px; font-size: 11px; line-height: 13px; color: #222; }
.teams-t { font: 700 14px "Open Sans", sans-serif; fill: #fff; }
.profile { overflow: visible; }
.tray { margin-left: 168px; }
.lang { margin-left: 20px; width: 44px; text-align: center; line-height: 23px; }
.sys { margin-left: 23px; }
.datetime { margin-left: auto; padding-right: 27px; text-align: right; line-height: 24px; letter-spacing: 0.05px; }
```
